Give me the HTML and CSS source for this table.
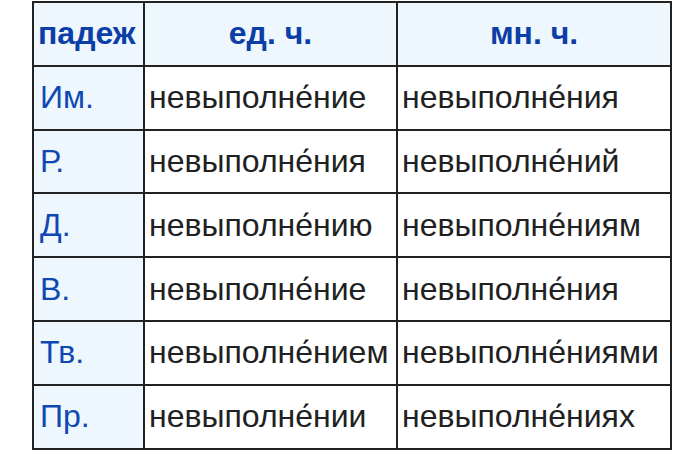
FILE: index.html
```html
<!DOCTYPE html>
<html lang="ru">
<head>
<meta charset="utf-8">
<link rel="stylesheet" href="styles.css">
</head>
<body>
<table class="decl">
  <colgroup>
    <col class="c-case">
    <col class="c-sg">
    <col class="c-pl">
  </colgroup>
  <tr class="head">
    <th class="case-h">падеж</th>
    <th>ед. ч.</th>
    <th>мн. ч.</th>
  </tr>
  <tr><th class="case">Им.</th><td>невыполне́ние</td><td>невыполне́ния</td></tr>
  <tr><th class="case">Р.</th><td>невыполне́ния</td><td>невыполне́ний</td></tr>
  <tr><th class="case">Д.</th><td>невыполне́нию</td><td>невыполне́ниям</td></tr>
  <tr><th class="case">В.</th><td>невыполне́ние</td><td>невыполне́ния</td></tr>
  <tr><th class="case">Тв.</th><td>невыполне́нием</td><td>невыполне́ниями</td></tr>
  <tr><th class="case">Пр.</th><td>невыполне́нии</td><td>невыполне́ниях</td></tr>
</table>
</body>
</html>
```
FILE: styles.css
```css
html, body {
  margin: 0;
  background: #ffffff;
}
body {
  padding: 1px 0 0 32px;
  font-family: "Liberation Sans", Arial, sans-serif;
}
.decl {
  border-collapse: collapse;
  table-layout: fixed;
  width: 638px;
  font-size: 32px;
  color: #202122;
}
.c-case { width: 111px; }
.c-sg { width: 253px; }
.c-pl { width: 274px; }
.decl th,
.decl td {
  border: 2px solid #222222;
  height: 61.8px;
  padding: 0 4px;
  vertical-align: middle;
  white-space: nowrap;
  overflow: hidden;
}
.decl td {
  text-align: left;
  font-weight: normal;
}
.head th {
  background: #eef6fe;
  color: #0b3ea6;
  font-weight: bold;
  text-align: center;
  font-size: 32px;
}
.head th.case-h {
  text-align: left;
  padding-left: 4px;
}
th.case {
  background: #eef6fe;
  color: #1048b2;
  font-weight: normal;
  text-align: left;
  padding-left: 6px;
}
```
